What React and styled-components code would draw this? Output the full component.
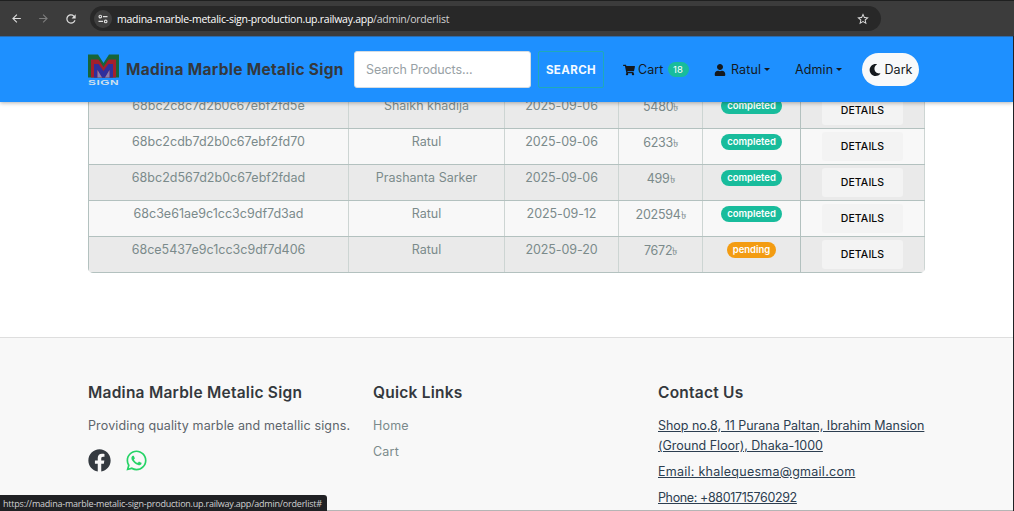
import React from "react";
import styled, { createGlobalStyle } from "styled-components";
import { FaShoppingCart, FaUser, FaMoon, FaFacebook, FaWhatsapp } from "react-icons/fa";
import { MdArrowBack, MdArrowForward, MdRefresh, MdStarOutline } from "react-icons/md";

const GlobalStyle = createGlobalStyle`
  *, *::before, *::after { box-sizing: border-box; }
  body { margin: 0; background: #fff; overflow: hidden; }
  body, input, button { font-family: Inter, "Liberation Sans", sans-serif; }
`;

const Window = styled.div`
  position: relative;
  display: flex;
  flex-direction: column;
  width: 1014px;
  height: 511px;
  overflow: hidden;
  background: #202124;
`;

const BrowserBar = styled.div`
  flex: none;
  display: flex;
  align-items: center;
  height: 36px;
  padding: 0 0 0 9px;
  background: #3c3c3c;
  border-top: 1px solid #1f2020;
  color: #dedede;
`;

const BrowserButton = styled.span`
  display: flex;
  justify-content: center;
  width: 15px;
  margin-right: 12px;
  color: ${(p) => (p.$off ? "#7d7d7d" : "#dedede")};
`;

const AddressBar = styled.div`
  display: flex;
  align-items: center;
  width: 791px;
  height: 25px;
  padding: 0 11px 0 4px;
  border-radius: 13px;
  background: #282828;
  font-family: "Open Sans", "Noto Sans", sans-serif;
  font-size: 10.5px;
  letter-spacing: -0.25px;
`;

const SiteInfo = styled.span`
  display: flex;
  align-items: center;
  justify-content: center;
  width: 18px;
  height: 18px;
  margin-right: 5px;
  border-radius: 50%;
  background: #3f3f3f;
`;

const Address = styled.span`
  flex: 1;
  color: #d2d2d2;
  white-space: nowrap;
  b { font-weight: 400; color: #fff; }
`;

const Site = styled.div`
  flex: 1;
  display: flex;
  flex-direction: column;
  width: 1013px;
  background: #fff;
  border-bottom: 1px solid #b5b5b5;
  overflow: hidden;
`;

const Navbar = styled.header`
  position: relative;
  z-index: 1;
  flex: none;
  display: flex;
  align-items: center;
  height: 66px;
  padding: 0 0 0 88px;
  border-top: 1px solid #2c6cae;
  background: #1e90ff;
  box-shadow: 0 1px 4px rgba(0, 0, 0, 0.3);
  color: #15191d;
`;

const Brand = styled.div`
  display: flex;
  align-items: center;
  gap: 7px;
  width: 266px;
  color: #34383d;
  font-size: 15.5px;
  font-weight: 700;
  letter-spacing: 0.3px;
  white-space: nowrap;
`;

const SearchInput = styled.input`
  width: 177px;
  height: 37px;
  margin-right: 7px;
  padding: 0 11px;
  border: 1px solid #d5dce2;
  border-radius: 3px;
  background: #fff;
  font-size: 12.5px;
  letter-spacing: -0.12px;
  &::placeholder { color: #98a1a5; opacity: 1; }
`;

const SearchButton = styled.button`
  width: 66px;
  height: 37px;
  margin-right: 19px;
  padding: 0;
  border: 1px solid #20aab8;
  border-radius: 2px;
  background: transparent;
  color: #f4faff;
  font-size: 11.5px;
  font-weight: 700;
  letter-spacing: 0.4px;
`;

const NavItem = styled.a`
  display: flex;
  align-items: center;
  gap: ${(p) => p.$gap || 3}px;
  width: ${(p) => p.$width}px;
  font-size: 12.5px;
  letter-spacing: 0.1px;
  white-space: nowrap;
`;

const CountBadge = styled.span`
  width: 21px;
  margin-left: 1px;
  border-radius: 8px;
  background: #18bc9c;
  color: #fff;
  font-size: 9.5px;
  line-height: 15px;
  text-align: center;
`;

const Caret = styled.span`
  display: inline-block;
  margin-left: 3px;
  border: 3.5px solid transparent;
  border-top-color: currentColor;
  border-bottom: 0;
  vertical-align: 3px;
`;

const ThemeButton = styled.button`
  display: flex;
  align-items: center;
  justify-content: center;
  gap: 4px;
  width: 57px;
  height: 33px;
  padding: 0;
  border: 0;
  border-radius: 17px;
  background: #f8f9fa;
  color: #15191d;
  font-size: 12.5px;
`;

const Orders = styled.main`
  flex: none;
  display: flex;
  flex-direction: column;
  justify-content: flex-end;
  width: 837px;
  height: 171px;
  margin-left: 88px;
  overflow: hidden;
  border-radius: 0 0 5px 5px;
`;

const OrderRow = styled.div`
  flex: none;
  display: grid;
  grid-template-columns: 261px 156px 114px 84px 98px 124px;
  height: 36px;
  border-bottom: 1px solid #b3c1bf;
  background: ${(p) => (p.$striped ? "#eaeaea" : "#f8f8f8")};
`;

const Cell = styled.div`
  display: flex;
  justify-content: center;
  padding-top: ${(p) => p.$top || 3}px;
  border-right: 1px solid ${(p) => (p.$strong ? "#b3c1bf" : "#cdd5d3")};
  color: #7b8a8b;
  font-size: 12.5px;
  line-height: 20px;
  letter-spacing: ${(p) => p.$track || 0}px;
  white-space: nowrap;
  &:first-child { border-left: 1px solid #b3c1bf; }
`;

const Taka = styled.span`
  font-size: 11px;
`;

const Status = styled.span`
  height: 16px;
  padding: 0 6px;
  border-radius: 8px;
  background: ${(p) => (p.$pending ? "#f39c12" : "#18bc9c")};
  color: #fff;
  font-size: 9.5px;
  font-weight: 600;
  line-height: 16px;
`;

const DetailsButton = styled.button`
  width: 81px;
  height: 29px;
  padding: 0;
  border: 0;
  border-radius: 3px;
  background: #f3f3f3;
  color: #080808;
  font-size: 10.5px;
  font-weight: 500;
  letter-spacing: 0.08px;
`;

const Footer = styled.footer`
  flex: 1;
  display: grid;
  grid-template-columns: 285px 285px 290px;
  margin-top: 64px;
  padding: 44px 0 0 88px;
  border-top: 1px solid #dedede;
  background: #f8f8f8;
`;

const FooterHeading = styled.h5`
  margin: 0 0 12px;
  color: #34383d;
  font-size: 15.5px;
  font-weight: 600;
  line-height: 22px;
  letter-spacing: 0.24px;
`;

const FooterText = styled.p`
  margin: 0 0 6px;
  color: ${(p) => p.$color || "#5d646b"};
  font-size: 12.5px;
  line-height: 20px;
  letter-spacing: ${(p) => p.$track || 0}px;
  text-decoration: ${(p) => (p.$underline ? "underline" : "none")};
  white-space: nowrap;
`;

const Socials = styled.div`
  display: flex;
  align-items: center;
  gap: 14px;
  margin-top: 13px;
`;

const StatusBubble = styled.div`
  position: absolute;
  left: 0;
  bottom: 0;
  width: 327px;
  height: 16px;
  padding-left: 3px;
  border-radius: 0 3px 0 0;
  background: #202124;
  color: #cfd0d1;
  font-family: "Open Sans", "Noto Sans", sans-serif;
  font-size: 9px;
  line-height: 17px;
  letter-spacing: -0.22px;
  white-space: nowrap;
`;

const Logo = () => (
  <svg width="31" height="31" viewBox="0 0 31 31">
    <path d="M0 0.5H10L15.500 9L21 0.500H31V23.500H0Z" fill="#16653a" />
    <path d="M3 5.500H10.500L15.500 13L20.500 5.500H28V23.500H3Z" fill="#a3202c" />
    <path d="M6 23.500V10H10.500L15.500 17L20.500 10H25V23.500H21.500V16L17 23.500H14L9.500 16V23.500Z" fill="#2f2f9c" />
    <path d="M9.500 23.500V16L14 23.500ZM21.500 23.500V16L17 23.500Z" fill="#8a7fb0" />
    <text x="0" y="30.500" textLength="31" lengthAdjust="spacingAndGlyphs" fontFamily="Liberation Sans" fontWeight="700" fontSize="7.500" fill="#cfe0ee">SIGN</text>
  </svg>
);

const TuneIcon = () => (
  <svg width="10" height="10" viewBox="0 0 10 10" fill="none" stroke="#dedede" strokeWidth="1.1">
    <circle cx="2.3" cy="2.6" r="1.3" />
    <path d="M5 2.6H9.5M0.5 7.4H5" />
    <circle cx="7.7" cy="7.4" r="1.3" />
  </svg>
);

const orders = [
  { id: "68bc2c8c7d2b0c67ebf2fd5e", user: "Shaikh khadija", date: "2025-09-06", total: 5480, status: "completed" },
  { id: "68bc2cdb7d2b0c67ebf2fd70", user: "Ratul", date: "2025-09-06", total: 6233, status: "completed" },
  { id: "68bc2d567d2b0c67ebf2fdad", user: "Prashanta Sarker", date: "2025-09-06", total: 499, status: "completed" },
  { id: "68c3e61ae9c1cc3c9df7d3ad", user: "Ratul", date: "2025-09-12", total: 202594, status: "completed" },
  { id: "68ce5437e9c1cc3c9df7d406", user: "Ratul", date: "2025-09-20", total: 7672, status: "pending" },
];

export default function App() {
  return (
    <Window>
      <GlobalStyle />
      <BrowserBar>
        <BrowserButton><MdArrowBack size={13} /></BrowserButton>
        <BrowserButton $off><MdArrowForward size={13} /></BrowserButton>
        <BrowserButton><MdRefresh size={14} /></BrowserButton>
        <AddressBar>
          <SiteInfo><TuneIcon /></SiteInfo>
          <Address><b>madina-marble-metalic-sign-production.up.railway.app</b>/admin/orderlist</Address>
          <MdStarOutline size={14} />
        </AddressBar>
      </BrowserBar>
      <Site>
        <Navbar>
          <Brand><Logo />Madina Marble Metalic Sign</Brand>
          <SearchInput placeholder="Search Products..." />
          <SearchButton>SEARCH</SearchButton>
          <NavItem $width={91}><FaShoppingCart size={12} />Cart <CountBadge>18</CountBadge></NavItem>
          <NavItem $width={81} $gap={5}><FaUser size={12} /><span>Ratul<Caret /></span></NavItem>
          <NavItem $width={67}><span>Admin<Caret /></span></NavItem>
          <ThemeButton><FaMoon size={12} />Dark</ThemeButton>
        </Navbar>
        <Orders>
          {orders.map((o, i) => (
            <OrderRow key={o.id} $striped={i % 2 === 0}>
              <Cell $track={0}>{o.id}</Cell>
              <Cell>{o.user}</Cell>
              <Cell $track={-0.08}>{o.date}</Cell>
              <Cell $top={4} $track={-0.25}>{o.total}<Taka>৳</Taka></Cell>
              <Cell $top={5} $strong><Status $pending={o.status === "pending"}>{o.status}</Status></Cell>
              <Cell $top={3}><DetailsButton>DETAILS</DetailsButton></Cell>
            </OrderRow>
          ))}
        </Orders>
        <Footer>
          <section>
            <FooterHeading>Madina Marble Metalic Sign</FooterHeading>
            <FooterText $track={0.14}>Providing quality marble and metallic signs.</FooterText>
            <Socials>
              <FaFacebook size={23} color="#343a40" />
              <FaWhatsapp size={23} color="#25d366" />
            </Socials>
          </section>
          <section>
            <FooterHeading>Quick Links</FooterHeading>
            <FooterText $color="#7b8a8b" $track={0.2}>Home</FooterText>
            <FooterText $color="#7b8a8b" $track={0.2}>Cart</FooterText>
          </section>
          <section>
            <FooterHeading>Contact Us</FooterHeading>
            <FooterText $underline $color="#2c3e50" $track={-0.02}>Shop no.8, 11 Purana Paltan, Ibrahim Mansion<br />(Ground Floor), Dhaka-1000</FooterText>
            <FooterText $underline $color="#2c3e50" $track={0.26}>Email: khalequesma@gmail.com</FooterText>
            <FooterText $underline $color="#2c3e50" $track={-0.37}>Phone: +8801715760292</FooterText>
          </section>
        </Footer>
      </Site>
      <StatusBubble>https://madina-marble-metalic-sign-production.up.railway.app/admin/orderlist#</StatusBubble>
    </Window>
  );
}
